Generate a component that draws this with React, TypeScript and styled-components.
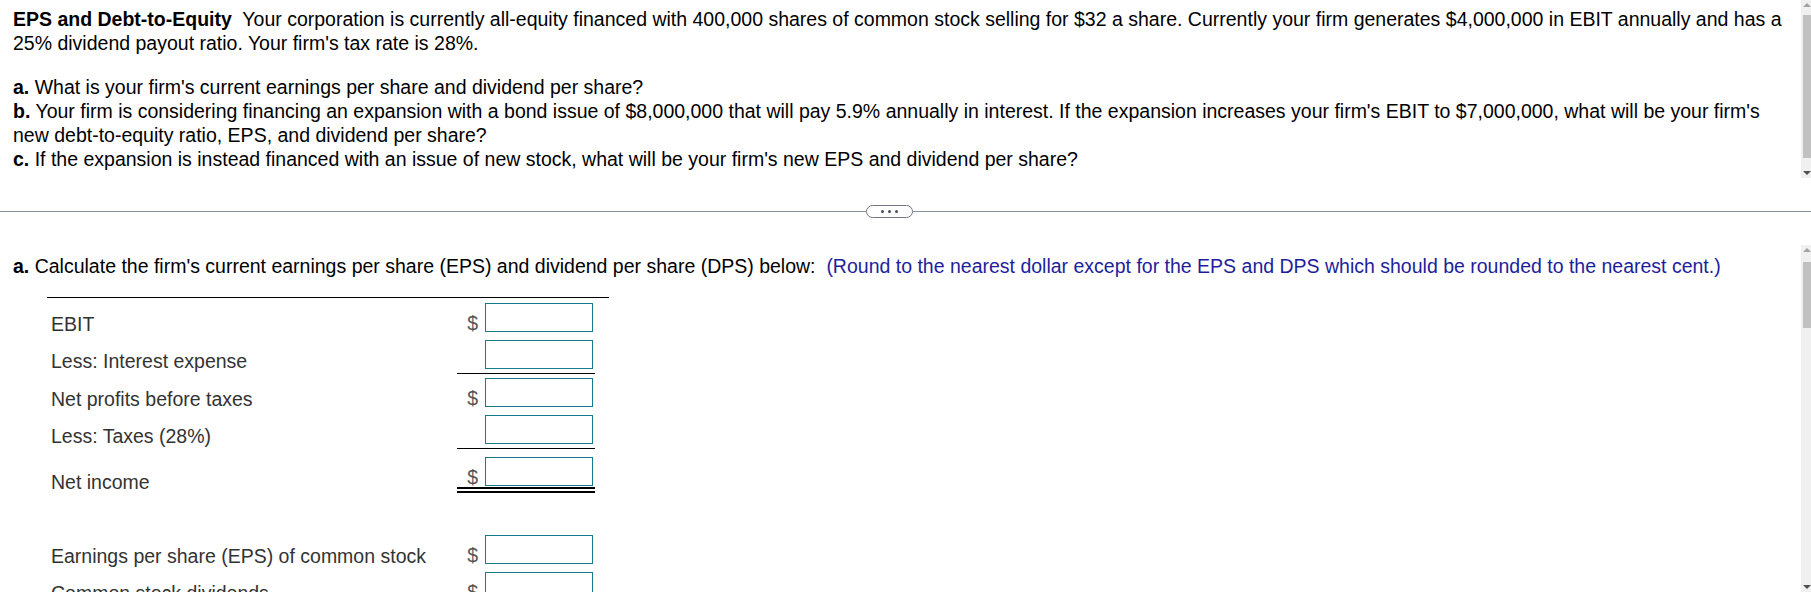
import React from "react";
import styled, { createGlobalStyle, css } from "styled-components";

const Global = createGlobalStyle`
  html, body { margin: 0; padding: 0; background: #ffffff; }
  body { font-family: "Liberation Sans", Arial, sans-serif; }
`;

const Page = styled.div`
  width: 1811px;
  height: 603px;
  overflow: hidden;
  display: flex;
  flex-direction: column;
  background: #fff;
`;

const Pane = styled.section<{ $h: number }>`
  height: ${(p) => p.$h}px;
  display: flex;
  flex-direction: row;
  flex-shrink: 0;
`;

const PaneBody = styled.div<{ $pt: number }>`
  flex: 1;
  overflow: hidden;
  padding: ${(p) => p.$pt}px 8px 0 13px;
  font-size: 19.5px;
  line-height: 24px;
  color: #000;
`;

const Para = styled.p<{ $mb?: number }>`
  margin: 0 0 ${(p) => p.$mb ?? 0}px 0;
`;

const Blue = styled.span`
  color: #1e1e9c;
`;

const Track = styled.div`
  width: 10px;
  background: #f0f0f0;
  display: flex;
  flex-direction: column;
  align-items: flex-end;
  padding: 3px 0 3px 0;
  box-sizing: border-box;
`;

const Arrow = styled.div<{ $dir: "up" | "down"; $dark?: boolean }>`
  width: 0;
  height: 0;
  border-left: 4px solid transparent;
  border-right: 4px solid transparent;
  ${(p) =>
    p.$dir === "up"
      ? css`border-bottom: 4px solid ${p.$dark ? "#505050" : "#a3a3a3"};`
      : css`border-top: 4px solid ${p.$dark ? "#505050" : "#a3a3a3"};`}
`;

const Thumb = styled.div<{ $top: number; $h: number }>`
  width: 8px;
  height: ${(p) => p.$h}px;
  margin-top: ${(p) => p.$top}px;
  background: #c1c1c1;
`;

const Spacer = styled.div`
  flex: 1;
`;

const Divider = styled.div`
  height: 67px;
  flex-shrink: 0;
  display: grid;
  grid-template-columns: 866px 47px 1fr;
  align-items: center;
`;

const DividerLine = styled.div`
  height: 1px;
  background: #8a929c;
`;

const Pill = styled.div`
  height: 13px;
  box-sizing: border-box;
  border: 1px solid #6f7782;
  border-radius: 7px;
  background: #fff;
  display: flex;
  align-items: center;
  justify-content: center;
  gap: 4px;
`;

const Dot = styled.span`
  width: 3px;
  height: 3px;
  border-radius: 50%;
  background: #4a4f57;
`;

const Sheet = styled.div`
  margin: 19px 0 0 34px;
  width: 562px;
  border-top: 1px solid #000;
  padding-top: 1px;
  display: flex;
  flex-direction: column;
`;

const Row = styled.div`
  display: grid;
  grid-template-columns: 410px 28px 110px;
  height: 37px;
  align-items: center;
`;

const Label = styled.div<{ $drop?: number }>`
  padding-left: 4px;
  padding-top: ${(p) => p.$drop ?? 13}px;
  color: #333;
  white-space: nowrap;
`;

const Dollar = styled.div`
  padding-top: 10px;
  color: #555;
  text-align: right;
  padding-right: 7px;
`;

const Field = styled.input`
  width: 108px;
  height: 29px;
  box-sizing: border-box;
  border: 1px solid #167b8e;
  margin: 0;
  padding: 0 4px;
  font: inherit;
  background: #fff;
  outline: none;
`;

const Rule = styled.div<{ $double?: boolean }>`
  margin-left: 410px;
  width: 138px;
  ${(p) =>
    p.$double
      ? css`height: 0; border-bottom: 6px double #000; margin-top: 1px;`
      : css`height: 1px; background: #000;`}
`;

const Gap = styled.div`
  height: 38px;
`;

type Line = { label: string; dollar?: boolean; drop?: number; rule?: "single" | "double" };

const lines: Line[] = [
  { label: "EBIT", dollar: true },
  { label: "Less: Interest expense", rule: "single" },
  { label: "Net profits before taxes", dollar: true },
  { label: "Less: Taxes (28%)", rule: "single" },
  { label: "Net income", dollar: true, drop: 21, rule: "double" },
];

const lower: Line[] = [
  { label: "Earnings per share (EPS) of common stock", dollar: true },
  { label: "Common stock dividends", dollar: true },
];

function Item({ l }: { l: Line }) {
  return (
    <>
      <Row>
        <Label $drop={l.drop}>{l.label}</Label>
        <Dollar>{l.dollar ? "$" : ""}</Dollar>
        <Field type="text" aria-label={l.label} />
      </Row>
      {l.rule === "single" && <Rule />}
      {l.rule === "double" && <Rule $double />}
    </>
  );
}

function Scroll({ top, h, upDark }: { top: number; h: number; upDark?: boolean }) {
  return (
    <Track>
      <Arrow $dir="up" $dark={upDark} />
      <Thumb $top={top} $h={h} />
      <Spacer />
      <Arrow $dir="down" $dark />
    </Track>
  );
}

export default function App() {
  return (
    <Page>
      <Global />
      <Pane $h={178}>
        <PaneBody $pt={7}>
          <Para $mb={20}>
            <b>EPS and Debt-to-Equity</b>{"\u00a0 "}Your corporation is currently all-equity financed with
            400,000 shares of common stock selling for $32 a share. Currently your firm generates $4,000,000
            in EBIT annually and has a 25% dividend payout ratio. Your firm's tax rate is 28%.
          </Para>
          <Para>
            <b>a.</b> What is your firm's current earnings per share and dividend per share?
          </Para>
          <Para>
            <b>b.</b> Your firm is considering financing an expansion with a bond issue of $8,000,000 that
            will pay 5.9% annually in interest. If the expansion increases your firm's EBIT to $7,000,000,
            what will be your firm's new debt-to-equity ratio, EPS, and dividend per share?
          </Para>
          <Para>
            <b>c.</b> If the expansion is instead financed with an issue of new stock, what will be your
            firm's new EPS and dividend per share?
          </Para>
        </PaneBody>
        <Scroll top={8} h={143} />
      </Pane>
      <Divider>
        <DividerLine />
        <Pill>
          <Dot />
          <Dot />
          <Dot />
        </Pill>
        <DividerLine />
      </Divider>
      <Pane $h={347}>
        <PaneBody $pt={9}>
          <Para>
            <b>a.</b> Calculate the firm's current earnings per share (EPS) and dividend per share (DPS)
            below:{"\u00a0 "}
            <Blue>
              (Round to the nearest dollar except for the EPS and DPS which should be rounded to the nearest
              cent.)
            </Blue>
          </Para>
          <Sheet>
            {lines.map((l) => (
              <Item key={l.label} l={l} />
            ))}
            <Gap />
            {lower.map((l) => (
              <Item key={l.label} l={l} />
            ))}
          </Sheet>
        </PaneBody>
        <Scroll top={10} h={66} />
      </Pane>
    </Page>
  );
}
